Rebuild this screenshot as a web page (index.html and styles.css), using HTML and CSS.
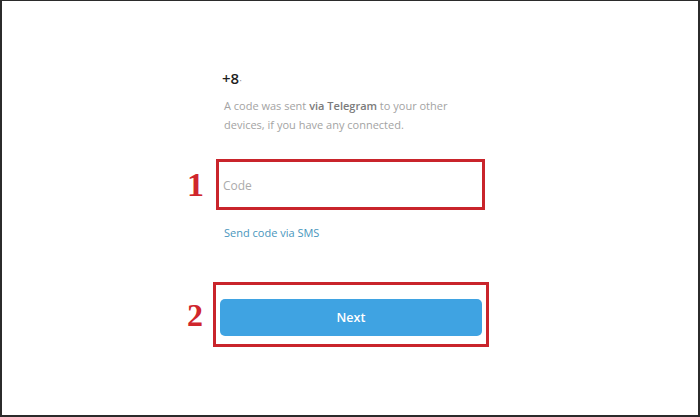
FILE: index.html
```html
<!DOCTYPE html>
<html>
<head>
<meta charset="utf-8">
<link rel="stylesheet" href="styles.css">
</head>
<body>
<div class="frame">
  <div class="phone">+8<span class="cut">·</span></div>
  <p class="desc">A code was sent <b>via Telegram</b> to your other<br>devices, if you have any connected.</p>
  <div class="step step-1">
    <span class="num">1</span>
    <div class="mark mark-1">
      <div class="field">Code</div>
    </div>
  </div>
  <a class="sms">Send code via SMS</a>
  <div class="step step-2">
    <span class="num num-2">2</span>
    <div class="mark mark-2">
      <div class="btn">Next</div>
    </div>
  </div>
</div>
</body>
</html>
```
FILE: styles.css
```css
html, body {
  margin: 0;
  padding: 0;
  background: #fff;
}
.frame {
  width: 700px;
  height: 417px;
  box-sizing: border-box;
  border: 2px solid #2b2b2b;
  border-top-width: 1px;
  padding: 67px 0 0 181px;
  font-family: "Open Sans", "Noto Sans", sans-serif;
  display: flex;
  flex-direction: column;
  align-items: flex-start;
}
.phone {
  margin-left: 39px;
  font-size: 15px;
  line-height: 20px;
  color: #1f1f1f;
  font-weight: 600;
}
.cut {
  color: #999;
  font-weight: 400;
  font-size: 10px;
}
.desc {
  margin: 6px 0 0 41px;
  font-size: 11px;
  line-height: 19px;
  color: #a3a3a3;
}
.desc b {
  color: #7b7b7b;
  font-weight: 600;
}
.step {
  display: flex;
  align-items: center;
}
.step-1 {
  margin-top: 25px;
}
.step-2 {
  margin-top: 41px;
}
.num {
  width: 33px;
  font-family: "Liberation Serif", serif;
  font-weight: 700;
  font-size: 34px;
  line-height: 1;
  color: #d0262c;
  padding-left: 4px;
  box-sizing: border-box;
}
.num-2 {
  width: 30px;
  font-size: 32px;
}
.mark {
  border: 3px solid #c9242b;
  box-sizing: border-box;
}
.mark-1 {
  width: 269px;
  height: 51px;
  display: flex;
  align-items: center;
  padding-left: 4px;
}
.field {
  font-size: 12px;
  color: #ababab;
  padding-top: 1px;
}
.mark-2 {
  width: 276px;
  height: 65px;
  padding: 14px 4px 8px 4px;
}
.btn {
  height: 100%;
  background: #3fa3e2;
  border-radius: 5px;
  color: #fff;
  font-size: 12.5px;
  font-weight: 600;
  display: flex;
  align-items: center;
  justify-content: center;
}
.sms {
  margin: 15px 0 0 41px;
  font-size: 11px;
  line-height: 16px;
  color: #4896bd;
}
```
